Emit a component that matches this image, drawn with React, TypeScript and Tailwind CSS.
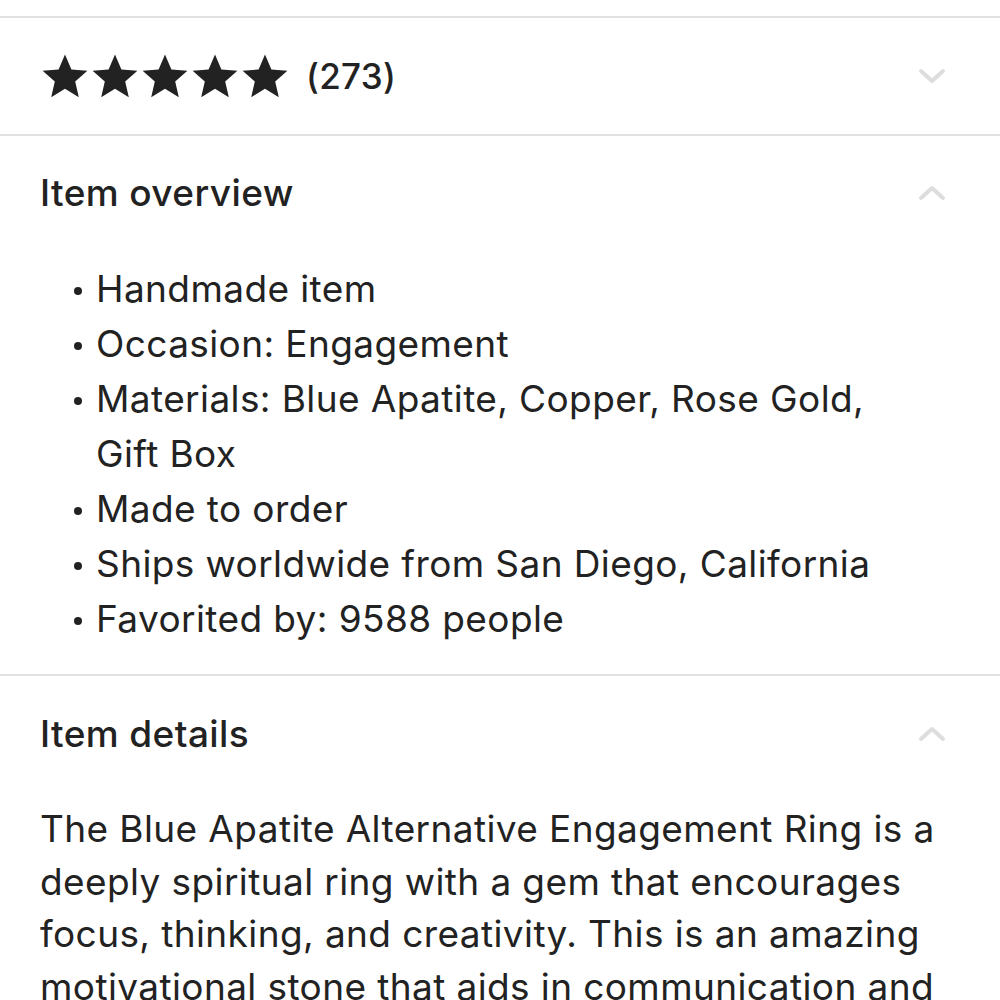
import React from "react";

const Star = () => (
  <svg width="50" height="46" viewBox="0 0 24 23" className="shrink-0">
    <path d="M12 0.8l3.2 7.4 8 0.7-6.1 5.3 1.8 7.9L12 17.9l-6.9 4.2 1.8-7.9L0.8 8.9l8-0.7z" fill="#222222" />
  </svg>
);

const Chevron = ({ up }: { up?: boolean }) => (
  <svg width="30" height="18" viewBox="0 0 30 18" className="shrink-0">
    <path
      d={up ? "M4 14 L15 4 L26 14" : "M4 4 L15 14 L26 4"}
      stroke="#dddddd"
      strokeWidth="4"
      fill="none"
      strokeLinecap="round"
      strokeLinejoin="round"
    />
  </svg>
);

const items = [
  "Handmade item",
  "Occasion: Engagement",
  "Materials: Blue Apatite, Copper, Rose Gold, Gift Box",
  "Made to order",
  "Ships worldwide from San Diego, California",
  "Favorited by: 9588 people",
];

export default function App() {
  return (
    <div
      className="w-[1000px] h-[1000px] overflow-hidden bg-white text-[#222222]"
      style={{ fontFamily: "Inter, 'Liberation Sans', sans-serif" }}
    >
      <div className="h-[16px]" />
      <div className="border-t-2 border-[#e1e1e1] h-[118px] flex items-center justify-between pl-[40px] pr-[53px]">
        <div className="flex items-center">
          <div className="flex items-center">
            <Star />
            <Star />
            <Star />
            <Star />
            <Star />
          </div>
          <span className="ml-[16px] text-[35px] font-medium tracking-[0.3px]">(273)</span>
        </div>
        <Chevron />
      </div>
      <div className="border-t-2 border-[#e1e1e1] pl-[40px] pr-[53px]">
        <div className="h-[114px] flex items-center justify-between">
          <h2 className="text-[37px] font-medium tracking-[0.4px]">Item overview</h2>
          <Chevron up />
        </div>
        <ul className="pl-[56px] pr-[40px] pt-[11px] pb-[28px] text-[37px] leading-[55px] tracking-[0.4px]">
          {items.map((t) => (
            <li key={t} className="relative">
              <span className="absolute left-[-22px] top-[26px] w-[8px] h-[8px] rounded-full bg-[#222222]" />
              {t}
            </li>
          ))}
        </ul>
      </div>
      <div className="border-t-2 border-[#e1e1e1] pl-[40px] pr-[40px]">
        <div className="h-[116px] flex items-center justify-between pr-[13px]">
          <h2 className="text-[37px] font-medium tracking-[0.4px]">Item details</h2>
          <Chevron up />
        </div>
        <p className="pt-[11px] text-[37px] leading-[52.5px] tracking-[0.4px]">
          The Blue Apatite Alternative Engagement Ring is a deeply spiritual ring with a gem that encourages
          focus, thinking, and creativity. This is an amazing motivational stone that aids in communication and
          self-expression.
        </p>
      </div>
    </div>
  );
}
